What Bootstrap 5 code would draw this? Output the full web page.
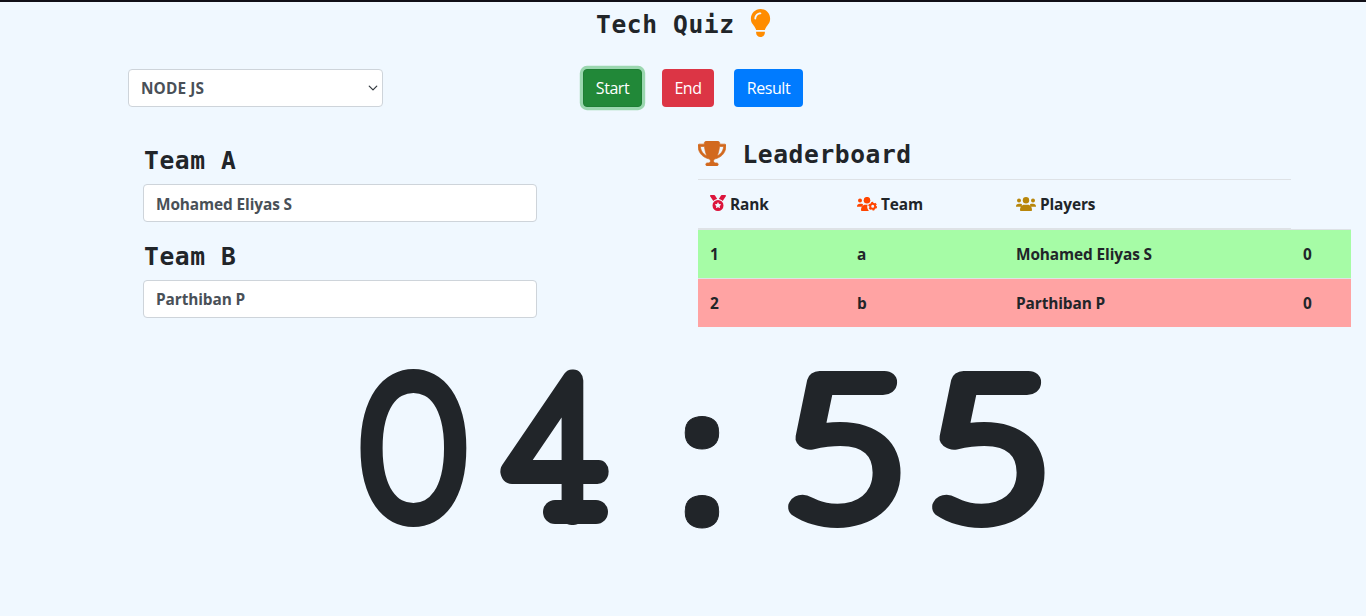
<!DOCTYPE html>
<html lang="en">
<head>
<meta charset="utf-8">
<meta name="viewport" content="width=device-width, initial-scale=1">
<title>Tech Quiz</title>
<link href="https://cdn.jsdelivr.net/npm/bootstrap@5.3.0/dist/css/bootstrap.min.css" rel="stylesheet">
<style>
body{background:#f0f8ff;color:#212529;font:400 16px/24px "Open Sans","Noto Sans",sans-serif;border-top:2px solid #111018;height:616px;overflow:hidden}
.topbar{padding-top:2px}
.title{font:700 24.6px/33.6px "DejaVu Sans Mono",monospace;letter-spacing:.59px;white-space:pre;margin:0;padding-left:1px}
.form-control,.form-select{height:38px;border:1px solid #ced4da;border-radius:4px;color:#495057;font-weight:700;font-size:15.4px;letter-spacing:-.1px;padding:7px 12px 5px}
.form-select{width:255px;background-size:10px 10px;background-position:right 4px center;letter-spacing:.1px}
.btn{height:38px;border-radius:4px;padding:6px 0;font-size:16px;letter-spacing:-.45px;border:1px solid transparent;color:#fff;text-align:center}
.btn-start{width:59px;background:#218838;border-color:#1e7e34;box-shadow:0 0 0 3.2px #9bd7b0}
.btn-end{width:52px;background:#dc3545}
.btn-result{width:69px;background:#007bff}
.controls{padding-left:128px;margin-top:27px}
.buttons{margin-left:200px;gap:20px}
.teams{width:394px;margin-left:143px}
.team-a{margin:37px 0 7px}
.team-b{margin:18px 0 6px}
.board{width:653px;margin-left:161px}
.board-head{margin:31px 0 8px}
.board-head svg{margin-bottom:2px}
.scores{width:653px;table-layout:fixed;border-collapse:collapse;font-weight:700;font-size:15.4px;letter-spacing:-.1px;line-height:24px}
.scores th,.scores td{padding:13px 12px 11px;border:0 solid #dee2e6;border-top-width:1px;white-space:nowrap}
.scores th{border-bottom-width:2px}
.scores svg{vertical-align:-1px}
.first-place{background:#a6fca6}
.second-place{background:#ffa3a3}
.clock{display:block;margin:-17px 0 0 342px;fill:#212529;stroke:#212529;stroke-linejoin:round}
.digit{font:100 190px Lato,sans-serif;stroke-width:22px;text-anchor:middle}
.colon{font:700 196px "Open Sans",sans-serif;stroke-width:1px;text-anchor:middle}
</style>
</head>
<body>
<header class="topbar d-flex justify-content-center align-items-center">
  <h1 class="title pt-1">Tech Quiz </h1>
  <svg width="21" height="28" viewBox="0 0 384 512" fill="#ff8c00"><path d="M272 384c9.6-31.9 29.5-59.1 49.2-86.2c5.2-7.1 10.4-14.2 15.4-21.4c19.8-28.5 31.4-63 31.4-100.3C368 78.8 289.2 0 192 0S16 78.8 16 176c0 37.3 11.6 71.9 31.4 100.3c5 7.2 10.2 14.3 15.4 21.4c19.8 27.1 39.7 54.4 49.2 86.2H272zM192 512c44.2 0 80-35.8 80-80V416H112v16c0 44.2 35.8 80 80 80zM112 176c0 8.8-7.2 16-16 16s-16-7.2-16-16c0-61.9 50.1-112 112-112c8.8 0 16 7.2 16 16s-7.2 16-16 16c-44.2 0-80 35.8-80 80z"/></svg>
</header>
<div class="controls d-flex">
  <select class="form-select"><option>NODE JS</option></select>
  <div class="buttons d-flex">
    <button class="btn btn-start">Start</button>
    <button class="btn btn-end">End</button>
    <button class="btn btn-result">Result</button>
  </div>
</div>
<main class="d-flex">
  <section class="teams">
    <h2 class="title team-a">Team A</h2>
    <input class="form-control" value="Mohamed Eliyas S">
    <h2 class="title team-b">Team B</h2>
    <input class="form-control" value="Parthiban P">
  </section>
  <section class="board">
    <div class="board-head d-flex align-items-center">
      <svg width="28" height="25" viewBox="0 0 576 512" preserveAspectRatio="none" fill="#d2691e" stroke="#d2691e" stroke-width="14"><path d="M400 0H176c-26.500 0-48.100 21.800-47.100 48.200c.2 5.300 .4 10.600 .7 15.800H24C10.700 64 0 74.700 0 88c0 92.600 33.500 157 78.500 200.700c44.300 43.100 98.300 64.800 138.100 75.800c23.400 6.500 39.400 26 39.400 45.600c0 20.900-17 37.900-37.900 37.900H192c-17.700 0-32 14.300-32 32s14.300 32 32 32H384c17.700 0 32-14.300 32-32s-14.300-32-32-32H357.900C337 448 320 431 320 410.100c0-19.600 15.900-39.200 39.400-45.600c39.900-11 93.900-32.700 138.200-75.800C542.500 245 576 180.600 576 88c0-13.300-10.700-24-24-24H446.400c.3-5.200 .5-10.400 .7-15.800C448.100 21.800 426.500 0 400 0zM48.900 112h84.400c9.100 90.100 29.200 150.300 51.900 190.600c-24.900-11-50.800-26.500-73.200-48.300c-32-31.100-58-76-63-142.300zM464.100 254.300c-22.400 21.800-48.300 37.300-73.200 48.300c22.700-40.300 42.800-100.500 51.900-190.600h84.400c-5.100 66.300-31.100 111.200-63 142.300z"/></svg>
      <h2 class="title"> Leaderboard</h2>
    </div>
    <table class="scores">
      <colgroup><col style="width:147px"><col style="width:159px"><col style="width:287px"><col style="width:60px"></colgroup>
      <thead><tr>
        <th><svg width="16" height="16" viewBox="0 0 512 512" fill="#dc143c"><path d="M4.100 38.200C1.400 34.200 0 29.400 0 24.600C0 11 11 0 24.600 0H133.900c11.200 0 21.700 5.900 27.400 15.500l68.500 114.100c-48.200 6.100-91.300 28.600-123.400 61.900L4.100 38.200zm503.700 0L405.600 191.500c-32.100-33.300-75.200-55.800-123.400-61.900L350.700 15.500C356.500 5.900 366.900 0 378.100 0H487.400C501 0 512 11 512 24.600c0 4.800-1.400 9.600-4.100 13.600zM80 336a176 176 0 1 1 352 0A176 176 0 1 1 80 336zm184.400-94.900c-3.400-7-13.300-7-16.800 0l-22.400 45.400c-1.400 2.800-4 4.700-7 5.100L168 298.900c-7.700 1.100-10.700 10.500-5.200 16l36.300 35.400c2.200 2.200 3.200 5.200 2.700 8.300l-8.600 49.900c-1.300 7.600 6.700 13.500 13.600 9.900l44.800-23.600c2.700-1.400 6-1.400 8.700 0l44.800 23.600c6.900 3.600 14.900-2.200 13.600-9.900l-8.600-49.900c-.5-3 .5-6.100 2.700-8.300l36.300-35.400c5.600-5.400 2.500-14.800-5.200-16l-50.100-7.300c-3-.4-5.700-2.400-7-5.100l-22.400-45.400z"/></svg> Rank</th>
        <th><svg width="20" height="14" viewBox="0 0 20 14" fill="#ff4500"><circle cx="3" cy="3.600" r="2"/><circle cx="10" cy="3.200" r="3.300"/><path d="M0 9.600C0 7.600 1.200 6.700 3 6.700h1.500l1.400.4C6 8.300 5.600 8.700 4.600 9.700H0zM4 13.200C4 10 5.700 7.800 8.300 7.800h2.400c-1.200 2.400.1 5 1.300 6.200H4.800c-.5 0-.8-.3-.8-.8z"/><circle cx="15.700" cy="9.200" r="2.500" fill="none" stroke="#ff4500" stroke-width="2"/><circle cx="15.700" cy="9.200" r="3.700" fill="none" stroke="#ff4500" stroke-width="1.400" stroke-dasharray="2 1.870"/></svg> Team</th>
        <th><svg width="20" height="14" viewBox="0 0 20 14" fill="#b8860b"><circle cx="3" cy="3.600" r="2"/><circle cx="10" cy="3.200" r="3.200"/><circle cx="17" cy="3.600" r="2"/><path d="M0 9.600C0 7.600 1.200 6.700 3 6.700h1.500l1.400.4C6 8.300 5.600 8.700 5 9.700H0zM20 9.600c0-2-1.200-2.900-3-2.900h-1.500l-1.400.4c-.1 1.200.3 1.600.9 2.600H20zM4 13.200C4 10 5.700 7.800 8.300 7.800h3.400C14.300 7.800 16 10 16 13.200c0 .5-.3.8-.8.8H4.800c-.5 0-.8-.3-.8-.8z"/></svg> Players</th>
      </tr></thead>
      <tbody>
        <tr class="first-place"><td>1</td><td>a</td><td>Mohamed Eliyas S</td><td>0</td></tr>
        <tr class="second-place"><td>2</td><td>b</td><td>Parthiban P</td><td>0</td></tr>
      </tbody>
    </table>
  </section>
</main>
<svg class="clock" width="720" height="280" viewBox="0 -40 720 280">
  <text class="digit" transform="translate(71.5 165) scale(.91 1)">0</text>
  <text class="digit" transform="translate(213 164) scale(.9 1)">4</text>
  <text class="colon" x="360" y="175">:</text>
  <text class="digit" transform="translate(503 165) scale(1.14 1)">5</text>
  <text class="digit" transform="translate(647 165) scale(1.14 1)">5</text>
  <rect x="201" y="150" width="65" height="24" rx="12" stroke="none"/>
</svg>
<script src="https://cdn.jsdelivr.net/npm/bootstrap@5.3.0/dist/js/bootstrap.bundle.min.js"></script>
</body>
</html>
